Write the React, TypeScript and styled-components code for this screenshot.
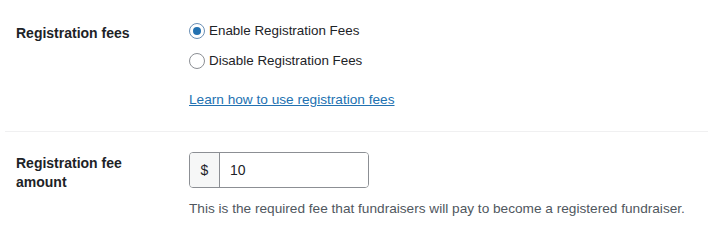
import styled, { createGlobalStyle } from "styled-components";

const GlobalStyle = createGlobalStyle`
  body {
    margin: 0;
    background: #ffffff;
    font-family: "Liberation Sans", Arial, sans-serif;
    color: #1d2327;
  }
`;

function App() {
  return <Page>
    <GlobalStyle />
    <Row $divider>
      <Label>Registration fees</Label>
      <Field>
        <RadioList>
          <RadioOption>
            <Radio $checked />
            Enable Registration Fees
          </RadioOption>
          <RadioOption>
            <Radio />
            Disable Registration Fees
          </RadioOption>
        </RadioList>
        <HelpLink href="#">Learn how to use registration fees</HelpLink>
      </Field>
    </Row>
    <Row>
      <Label>Registration fee amount</Label>
      <Field>
        <InputGroup>
          <Prefix>$</Prefix>
          <AmountInput defaultValue="10" />
        </InputGroup>
        <Description>
          This is the required fee that fundraisers will pay to become a registered fundraiser.
        </Description>
      </Field>
    </Row>
  </Page>
}

export default App;

const Page = styled.div`
  padding-left: 5px;
`

const Row = styled.div<{ $divider?: boolean }>`
  display: grid;
  grid-template-columns: 173px 1fr;
  padding: ${p => p.$divider ? "22px 0 22px 11px" : "20px 0 0 11px"};
  border-bottom: ${p => p.$divider ? "1px solid #f0f0f1" : "none"};
`

const Label = styled.div`
  width: 140px;
  font-size: 14px;
  font-weight: 700;
  line-height: 19px;
  padding-top: 2px;
`

const Field = styled.div`
  display: flex;
  flex-direction: column;
  align-items: flex-start;
`

const RadioList = styled.div`
  display: flex;
  flex-direction: column;
  gap: 12px;
`

const RadioOption = styled.label`
  display: flex;
  align-items: center;
  gap: 4px;
  font-size: 13.4px;
  line-height: 18px;
`

const Radio = styled.span<{ $checked?: boolean }>`
  box-sizing: border-box;
  width: 16px;
  height: 16px;
  border-radius: 50%;
  border: 1px solid ${p => p.$checked ? "#6a8fb5" : "#8c8f94"};
  background: #fff;
  display: flex;
  align-items: center;
  justify-content: center;

  &::after {
    content: "";
    display: ${p => p.$checked ? "block" : "none"};
    width: 8px;
    height: 8px;
    border-radius: 50%;
    background: #2271b1;
  }
`

const HelpLink = styled.a`
  margin-top: 21px;
  font-size: 13.65px;
  line-height: 18px;
  color: #2271b1;
  text-decoration: underline;
`

const InputGroup = styled.div`
  display: flex;
  width: 180px;
  height: 36px;
  box-sizing: border-box;
  border: 1px solid #8c8f94;
  border-radius: 4px;
  overflow: hidden;
`

const Prefix = styled.span`
  width: 29px;
  display: flex;
  align-items: center;
  justify-content: center;
  background: #f6f7f7;
  border-right: 1px solid #8c8f94;
  font-size: 14px;
`

const AmountInput = styled.input`
  flex: 1;
  min-width: 0;
  border: none;
  outline: none;
  padding: 0 10px;
  font-family: "Liberation Sans", Arial, sans-serif;
  font-size: 14px;
  color: #1d2327;
  background: #fff;
`

const Description = styled.p`
  margin: 12px 0 0;
  font-size: 13.65px;
  line-height: 18px;
  color: #50575e;
`
